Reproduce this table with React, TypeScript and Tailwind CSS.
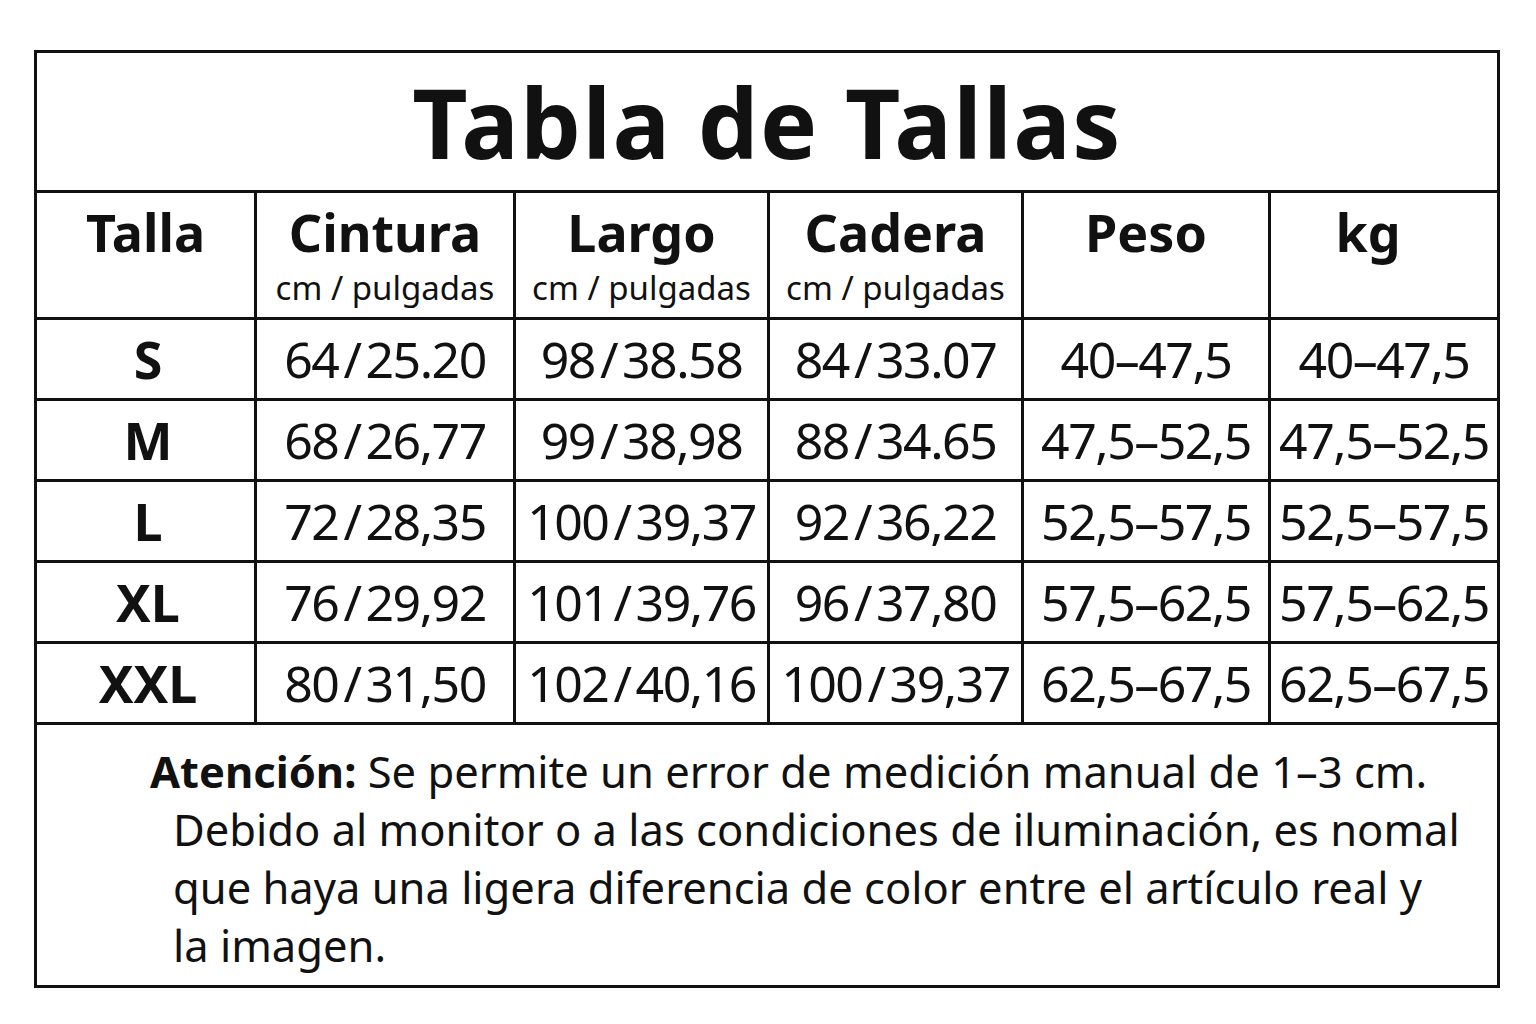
import React from "react";

const rows = [
  ["S", "64 / 25.20", "98 / 38.58", "84 / 33.07", "40–47,5", "40–47,5"],
  ["M", "68 / 26,77", "99 / 38,98", "88 / 34.65", "47,5–52,5", "47,5–52,5"],
  ["L", "72 / 28,35", "100 / 39,37", "92 / 36,22", "52,5–57,5", "52,5–57,5"],
  ["XL", "76 / 29,92", "101 / 39,76", "96 / 37,80", "57,5–62,5", "57,5–62,5"],
  ["XXL", "80 / 31,50", "102 / 40,16", "100 / 39,37", "62,5–67,5", "62,5–67,5"],
];

const headers = [
  { title: "Talla", sub: "", extra: "" },
  { title: "Cintura", sub: "cm / pulgadas", extra: "" },
  { title: "Largo", sub: "cm / pulgadas", extra: "" },
  { title: "Cadera", sub: "cm / pulgadas", extra: "" },
  { title: "Peso", sub: "", extra: "" },
  { title: "kg", sub: "", extra: "pr-[32px]" },
];

function cellBorder(col: number) {
  return col < 5 ? "border-r-[3px] border-b-[3px] border-[#111]" : "border-b-[3px] border-[#111]";
}

function Value({ text }: { text: string }) {
  // tighten the spaces around the slash like in the print
  const parts = text.split(" / ");
  if (parts.length === 1) return <>{text}</>;
  return (
    <>
      {parts[0]}
      <span className="mx-[5px]">/</span>
      {parts[1]}
    </>
  );
}

export default function App() {
  return (
    <div
      className="min-h-[1024px] w-[1536px] bg-white pt-[50px] pl-[34px] text-[#111]"
      style={{ fontFamily: '"Noto Sans", "Liberation Sans", sans-serif' }}
    >
      <div className="w-[1466px] border-[3px] border-[#111]">
        <div className="grid grid-cols-[220px_259px_254px_254px_247px_1fr]">
          <div className="col-span-6 flex h-[140px] items-center justify-center border-b-[3px] border-[#111]">
            <h1 className="text-[96px] leading-none font-bold tracking-[0.015em]">Tabla de Tallas</h1>
          </div>

          {headers.map((h, i) => (
            <div
              key={h.title}
              className={`flex h-[127px] flex-col items-center pt-[7px] ${h.extra} ${cellBorder(i)}`}
            >
              <div className="text-[52px] leading-[64px] font-bold">{h.title}</div>
              {h.sub && <div className="mt-[2px] text-[33px] leading-[44px]">{h.sub}</div>}
            </div>
          ))}

          {rows.map((r) =>
            r.map((v, i) => (
              <div
                key={r[0] + i}
                className={`flex h-[81px] items-center justify-center ${i === 0 ? "pl-[5px]" : ""} ${cellBorder(i)}`}
              >
                <span className={i === 0 ? "text-[52px] font-bold" : "text-[50px] tracking-[-0.03em]"}>
                  {i === 0 ? v : <Value text={v} />}
                </span>
              </div>
            ))
          )}
        </div>

        <div className="h-[260px] pt-[17px] text-[43.5px] leading-[58px]">
          <div className="pl-[113px]">
            <span className="font-bold">Atención:</span> Se permite un error de medición manual de 1–3 cm.
          </div>
          <div className="pl-[136px]">
            <div>Debido al monitor o a las condiciones de iluminación, es nomal</div>
            <div>que haya una ligera diferencia de color entre el artículo real y</div>
            <div>la imagen.</div>
          </div>
        </div>
      </div>
    </div>
  );
}
